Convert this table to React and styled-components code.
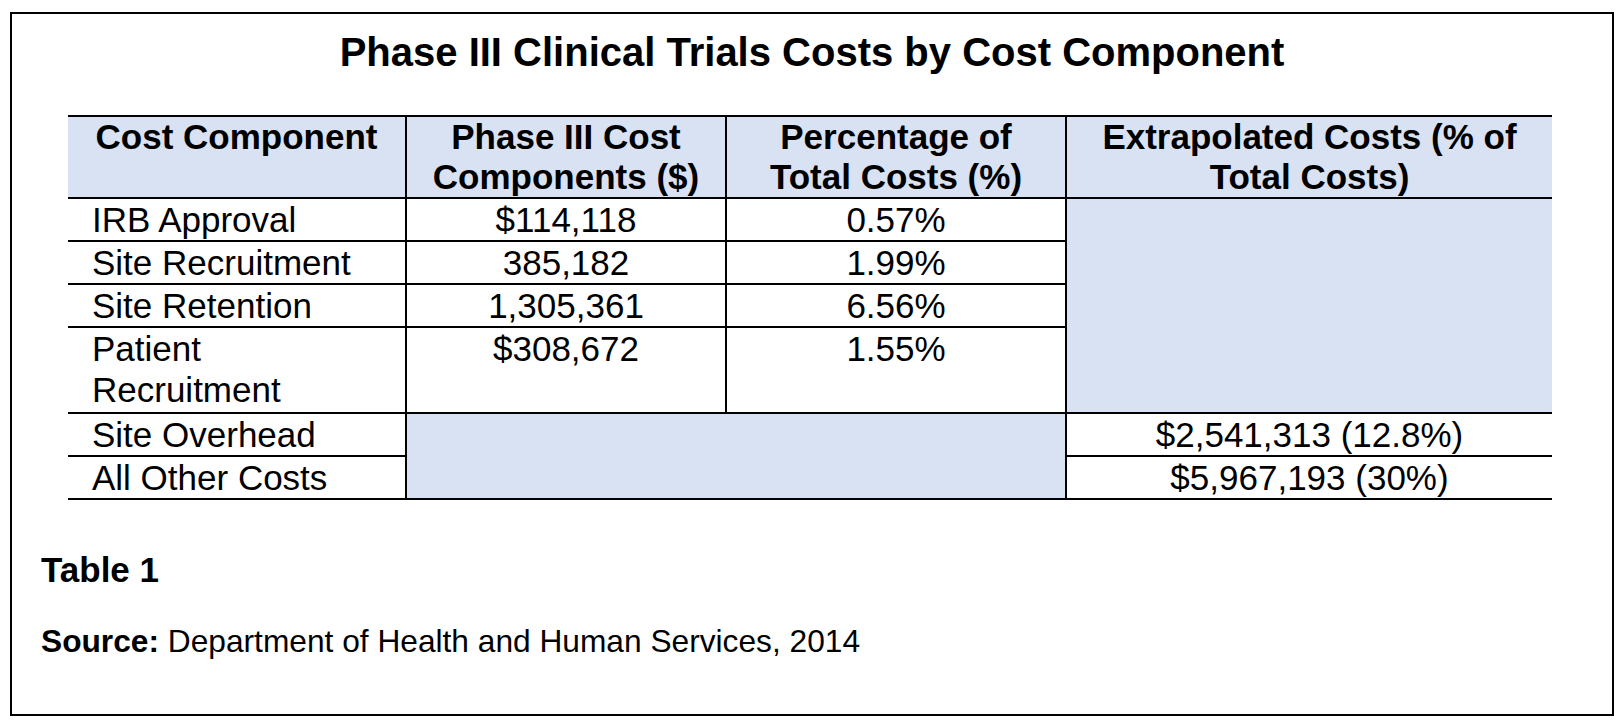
import React from 'react';
import styled, { createGlobalStyle } from 'styled-components';

const GlobalStyle = createGlobalStyle`
  html, body {
    margin: 0;
    padding: 0;
    background: #ffffff;
  }
  body {
    font-family: "Liberation Sans", Arial, sans-serif;
    color: #000000;
  }
`;

const Frame = styled.div`
  box-sizing: border-box;
  width: 1604px;
  height: 704px;
  margin: 12px 0 0 10px;
  border: 2px solid #000;
  padding: 14px 60px 0 29px;
  display: flex;
  flex-direction: column;
`;

const Title = styled.h1`
  margin: 0 -60px 39px -29px;
  font-size: 40px;
  line-height: 48px;
  font-weight: 700;
  text-align: center;
`;

const Grid = styled.div`
  display: grid;
  grid-template-columns: 339px 320px 340px 485px;
  grid-template-rows: 84px;
  grid-auto-rows: 43px;
  margin-left: 27px;
  width: 1484px;
`;

const HeadCell = styled.div`
  box-sizing: border-box;
  background: #d9e2f3;
  border-top: 2px solid #000;
  border-bottom: 2px solid #000;
  border-right: ${p => (p.$last ? 'none' : '2px solid #000')};
  padding: 0 12px;
  font-size: 35px;
  line-height: 40px;
  font-weight: 700;
  text-align: center;
`;

const Cell = styled.div`
  box-sizing: border-box;
  border-bottom: 2px solid #000;
  border-right: ${p => (p.$last ? 'none' : '2px solid #000')};
  padding: ${p => (p.$align === 'left' ? '0 8px 0 24px' : '0 8px')};
  font-size: 35px;
  line-height: 41px;
  text-align: ${p => p.$align || 'center'};
  grid-row: ${p => (p.$tall ? 'span 2' : 'auto')};
`;

const Shaded = styled.div`
  box-sizing: border-box;
  background: #d9e2f3;
  border-bottom: 2px solid #000;
  border-right: ${p => (p.$last ? 'none' : '2px solid #000')};
  grid-row: ${p => p.$rows};
  grid-column: ${p => p.$cols};
`;

const Caption = styled.div`
  margin-top: 50px;
  font-size: 35px;
  line-height: 40px;
  font-weight: 700;
`;

const Source = styled.p`
  margin: 33px 0 0;
  font-size: 31.7px;
  line-height: 36px;
`;

const headers = [
  ['Cost Component'],
  ['Phase III Cost', 'Components ($)'],
  ['Percentage of', 'Total Costs (%)'],
  ['Extrapolated Costs (% of', 'Total Costs)'],
];

const rows = [
  { name: ['IRB Approval'], cost: '$114,118', pct: '0.57%' },
  { name: ['Site Recruitment'], cost: '385,182', pct: '1.99%' },
  { name: ['Site Retention'], cost: '1,305,361', pct: '6.56%' },
  { name: ['Patient', 'Recruitment'], cost: '$308,672', pct: '1.55%' },
];

const extrapolated = [
  { name: 'Site Overhead', value: '$2,541,313 (12.8%)' },
  { name: 'All Other Costs', value: '$5,967,193 (30%)' },
];

const Lines = ({ parts }) =>
  parts.map((t, i) => (
    <React.Fragment key={i}>
      {i > 0 && <br />}
      {t}
    </React.Fragment>
  ));

const App = () => {
  return (
    <>
      <GlobalStyle />
      <Frame>
        <Title>Phase III Clinical Trials Costs by Cost Component</Title>

        <Grid>
          {headers.map((h, i) => (
            <HeadCell key={i} $last={i === headers.length - 1}>
              <Lines parts={h} />
            </HeadCell>
          ))}

          {rows.map((r, i) => (
            <React.Fragment key={r.name.join(' ')}>
              <Cell $align="left" $tall={r.name.length > 1}>
                <Lines parts={r.name} />
              </Cell>
              <Cell $tall={r.name.length > 1}>{r.cost}</Cell>
              <Cell $tall={r.name.length > 1}>{r.pct}</Cell>
              {i === 0 && <Shaded $rows="2 / span 5" $cols="4" $last />}
            </React.Fragment>
          ))}

          {extrapolated.map((r, i) => (
            <React.Fragment key={r.name}>
              <Cell $align="left">{r.name}</Cell>
              {i === 0 && <Shaded $rows="7 / span 2" $cols="2 / span 2" />}
              <Cell $last>{r.value}</Cell>
            </React.Fragment>
          ))}
        </Grid>

        <Caption>Table 1</Caption>
        <Source>
          <strong>Source:</strong> Department of Health and Human Services, 2014
        </Source>
      </Frame>
    </>
  );
};

export default App;
